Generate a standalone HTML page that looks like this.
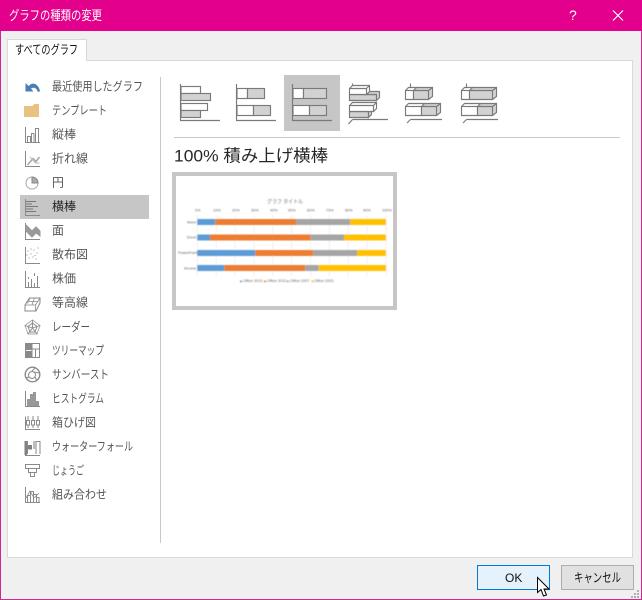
<!DOCTYPE html>
<html lang="ja"><head><meta charset="utf-8"><title>グラフの種類の変更</title>
<style>
html,body{margin:0;padding:0;background:#f0f0f0;width:642px;height:600px;overflow:hidden}
svg{display:block}
text{font-family:"Liberation Sans","Noto Sans CJK JP",sans-serif}
.l{font-size:12px;fill:#555}
</style></head><body>
<svg width="642" height="600" viewBox="0 0 642 600" xmlns="http://www.w3.org/2000/svg">
<defs><filter id="b" x="0" y="0" width="1" height="1"><feGaussianBlur stdDeviation="0.45"/></filter></defs>
<rect width="642" height="600" fill="#f0f0f0"/>
<rect x=".5" y=".5" width="641" height="599" fill="none" stroke="#d3278f"/>
<rect width="642" height="31" fill="#e3008c"/>
<text x="9" y="20" font-size="13" fill="#fff" textLength="93" lengthAdjust="spacingAndGlyphs">グラフの種類の変更</text>
<text x="569" y="20" font-size="14" fill="#fff">?</text>
<path d="M613 10.5 623 20.5M623 10.5 613 20.5" stroke="#fff" stroke-width="1.2" fill="none"/>

<rect x="7.5" y="60.5" width="625" height="497" fill="#fff" stroke="#d9d9d9"/>
<path d="M7.5 61V39.5H86.5V61" fill="#fff" stroke="#d9d9d9"/>
<rect x="8" y="58" width="78" height="4" fill="#fff"/>
<text x="15" y="54" font-size="12.5" fill="#111" textLength="63" lengthAdjust="spacingAndGlyphs">すべてのグラフ</text>

<rect x="20" y="195" width="129" height="24" fill="#c6c6c6"/>
<rect x="160" y="77" width="1" height="466" fill="#c8c8c8"/>

<g class="l">
<text class="l" x="52" y="90.5" textLength="91" lengthAdjust="spacingAndGlyphs">最近使用したグラフ</text>
<text class="l" x="52" y="114.5" textLength="55" lengthAdjust="spacingAndGlyphs">テンプレート</text>
<text class="l" x="52" y="138.5" textLength="24" lengthAdjust="spacingAndGlyphs">縦棒</text>
<text class="l" x="52" y="162.5" textLength="36" lengthAdjust="spacingAndGlyphs">折れ線</text>
<text class="l" x="52" y="186.5" textLength="12" lengthAdjust="spacingAndGlyphs">円</text>
<text class="l" style="fill:#222" x="52" y="210.5" textLength="24" lengthAdjust="spacingAndGlyphs">横棒</text>
<text class="l" x="52" y="234.5" textLength="12" lengthAdjust="spacingAndGlyphs">面</text>
<text class="l" x="52" y="258.5" textLength="36" lengthAdjust="spacingAndGlyphs">散布図</text>
<text class="l" x="52" y="282.5" textLength="24" lengthAdjust="spacingAndGlyphs">株価</text>
<text class="l" x="52" y="306.5" textLength="36" lengthAdjust="spacingAndGlyphs">等高線</text>
<text class="l" x="52" y="331" textLength="38" lengthAdjust="spacingAndGlyphs">レーダー</text>
<text class="l" x="52" y="354.5" textLength="52" lengthAdjust="spacingAndGlyphs">ツリーマップ</text>
<text class="l" x="52" y="378.5" textLength="57" lengthAdjust="spacingAndGlyphs">サンバースト</text>
<text class="l" x="52" y="402.5" textLength="52" lengthAdjust="spacingAndGlyphs">ヒストグラム</text>
<text class="l" x="52" y="426.5" textLength="44" lengthAdjust="spacingAndGlyphs">箱ひげ図</text>
<text class="l" x="52" y="450.5" textLength="81" lengthAdjust="spacingAndGlyphs">ウォーターフォール</text>
<text class="l" x="52" y="474.5" textLength="32" lengthAdjust="spacingAndGlyphs">じょうご</text>
<text class="l" x="52" y="498.5" textLength="55" lengthAdjust="spacingAndGlyphs">組み合わせ</text>
</g>

<!-- list icons -->
<path d="M25.5 83V91.5H33.5L31 88.8C32.6 87.2 36.5 87 37.8 92L40 91.2C38.8 84.4 33 81 28.6 86Z" fill="#4a7fb5"/>
<path d="M24 106H32.5L34 104H39V117H24Z" fill="#e9c282"/>
<g fill="none" stroke="#8a8a8a" stroke-width="1">
<!-- column -->
<path d="M25.5 127V142.5H40"/>
<path d="M27.5 142V136.5H30.5V142M31.5 142V133.5H34V142M35.5 142V128.5H38.5V142"/>
<!-- line -->
<path d="M25.5 151V166.5H40"/>
<path d="M27.5 165 33 158.5 36 161.5 39.5 157" stroke="#aaa" stroke-width="1.6"/>
<path d="M30 157 35.5 163 39.5 163" stroke="#bbb"/>
<!-- pie -->
<circle cx="32" cy="183" r="6" stroke="#aaa"/>
<path d="M32 177V183H38A6 6 0 0 0 32 177Z" fill="#aaa" stroke="#888"/>
<!-- bar -->
<path d="M25.5 199V215.5H40"/>
<path d="M26 201.5H36M26 204H32M26 206.5H38M26 209H33M26 211.5H36" stroke="#777"/>
<!-- area -->
<path d="M25.5 223V239.5H40"/>
<path d="M26 225 32 231 36 227 40 231V236L36 233 32 237 26 231Z" fill="#999" stroke="#999"/>
<!-- scatter -->
<path d="M25.5 247V263.5H40"/>
<!-- stock -->
<path d="M25.5 271V287.5H40"/>
<path d="M28.5 287V282M31.5 287V279M34.5 287V283M37.5 287V276M28.5 277V279M34.5 273V276"/>
<!-- contour -->
<path d="M25 305 29.5 298H40V303L36 311H25Z"/>
<path d="M25 305H35.5L40 298M35.5 305V311M29 301.5H38M27.5 303.5 30 298M32 305 34.5 298" stroke-width=".8"/>
<!-- radar -->
<path d="M32.5 320 40 325.5 37 334H28L25 325.5Z" stroke="#aaa"/>
<path d="M32.5 323 37 326.5 35 332H30L28 326.5ZM32.5 320V328M25 325.5 32.5 328 40 325.5M28 334 32.5 328 37 334" stroke="#888" stroke-width=".9"/>
<!-- treemap -->
<rect x="25.5" y="343.5" width="14" height="14" stroke="#888"/>
<!-- sunburst -->
<circle cx="32.5" cy="374.5" r="7.3" stroke-width="1.4"/>
<circle cx="32" cy="375" r="3.5" stroke-width="1"/>
<path d="M32 371 35 368M29 377 26 378M35 377 37 381M34 372 39 373" stroke-width="1"/>
<!-- histogram -->
<path d="M25.5 391V406.5H40"/>
<!-- box -->
<path d="M25.5 416.5V429.5H40"/>
<path d="M28 416V420M28 425V428M33 416V420M33 425V428M38 416V420M38 425V428"/>
<rect x="26.5" y="420.5" width="3" height="4.5" fill="#fff"/><rect x="31.5" y="420.5" width="3" height="4.5" fill="#fff"/><rect x="36.5" y="420.5" width="3" height="4.5" fill="#fff"/>
<!-- waterfall -->
<path d="M27.5 454V441M36 454V441.5H40V454" />
<path d="M25 455.5H40"/>
<!-- funnel -->
<path d="M25.5 464.5H39.5V468.5H25.5ZM28.5 468.5H36.5V472.5H28.5ZM30.5 472.5H34.5V476.5H30.5Z"/>
<!-- combo -->
<path d="M25.5 487V502.5H40"/>
<path d="M27.5 502V495.5H30.5V502M30.5 502V491.5H33.5V502M33.5 502V494.5H36.5V502M36.5 502V497.5H39V502"/>
<path d="M26 498 30 491 34 498 39 493" stroke-width=".8"/>
</g>
<g fill="#999">
<rect x="25" y="343" width="7" height="7" fill="#8a8a8a"/><rect x="25" y="351" width="7" height="7" fill="#8a8a8a"/>
<path d="M32 343.5V358M32 349H39M35.5 349V358" stroke="#888" fill="none"/>
<rect x="27" y="399" width="3" height="7"/><rect x="30" y="394" width="3" height="12"/><rect x="33" y="392" width="3" height="14"/><rect x="36" y="401" width="3" height="5"/>
<rect x="24.5" y="441" width="2.5" height="14" fill="#808080"/>
<rect x="28" y="445" width="4" height="4.5" fill="#808080"/>
<rect x="33" y="441" width="3" height="8" fill="#bdbdbd"/>
<circle cx="28" cy="251" r=".6"/><circle cx="31" cy="254" r=".6"/><circle cx="34" cy="250" r=".6"/><circle cx="37" cy="253" r=".6"/><circle cx="29" cy="258" r=".6"/><circle cx="33" cy="257" r=".6"/><circle cx="36" cy="259" r=".6"/><circle cx="38" cy="248" r=".6"/><circle cx="31" cy="249" r=".6"/><circle cx="27" cy="255" r=".6"/><circle cx="35" cy="255.5" r=".6"/>
</g>

<!-- selected thumb -->
<rect x="284" y="75" width="56" height="56" fill="#c6c6c6"/>
<g stroke="#7a7a7a" stroke-width="1.15" fill="#fff">
<!-- 1 -->
<rect x="181" y="86.5" width="19.5" height="7"/>
<rect x="181" y="93.5" width="29.5" height="7" fill="#d2d2d2"/>
<rect x="181" y="103.5" width="26.5" height="7"/>
<rect x="181" y="110.5" width="19.5" height="7" fill="#d2d2d2"/>
<path d="M180.5 84V120.5H220" fill="none"/>
<!-- 2 -->
<rect x="237" y="88.5" width="10.5" height="10"/><rect x="247.5" y="88.5" width="17" height="10" fill="#d2d2d2"/>
<rect x="237" y="105.5" width="16.5" height="10"/><rect x="253.5" y="105.5" width="17" height="10" fill="#d2d2d2"/>
<path d="M236.5 84V120.5H276" fill="none"/>
<!-- 3 -->
<rect x="293" y="88.5" width="10.5" height="10"/><rect x="303.5" y="88.5" width="23" height="10" fill="#d2d2d2"/>
<rect x="293" y="105.5" width="16.5" height="10"/><rect x="309.5" y="105.5" width="17" height="10" fill="#d2d2d2"/>
<path d="M292.5 84V120.5H332" fill="none"/>
<!-- 4 -->
<path d="M352.5 83.5V86M352.5 119.5H388M352.5 119.5 348.5 124" fill="none"/>
<path d="M349.5 94.5H376.5V100.5H349.5Z" fill="#d2d2d2"/><path d="M369.5 91.5H379.5V97.5L376.5 100.5V94.5H366.5Z" fill="#d2d2d2"/>
<path d="M349.5 88.5 352.5 85.5H369.5V91.5L366.5 94.5H349.5Z"/><path d="M366.5 94.5V88.5H349.5M366.5 88.5 369.5 85.5" fill="none"/>
<path d="M349.5 111.5H368.5V117.5H349.5Z" fill="#d2d2d2"/><path d="M368.5 117.5 371.5 114.5V111.5H368.5Z" fill="#d2d2d2"/>
<path d="M349.5 105.5 352.5 102.5H376.5V108.5L373.5 111.5H349.5Z"/><path d="M373.5 111.5V105.5H349.5M373.5 105.5 376.5 102.5" fill="none"/>
<!-- 5 -->
<path d="M410.5 83.5V87M410.5 119.5H442M410.5 119.5 407 123" fill="none"/>
<path d="M405.5 90.5 408.5 87.5H417V90.5H413.5V99.5H405.5Z"/><path d="M405.5 90.5H413.5" fill="none"/>
<path d="M413.5 90.5 416.5 87.5H432.5V96.5L428.5 99.5H413.5Z" fill="#d2d2d2"/><path d="M413.5 90.5H428.5V99.5M428.5 90.5 432.5 87.5" fill="none"/>
<path d="M405.5 106.5 408.5 103.5H424.5V106.5H421.5V115.5H405.5Z"/><path d="M405.5 106.5H421.5" fill="none"/>
<path d="M421.5 106.5 424.5 103.5H440.5V112.5L436.5 115.5H421.5Z" fill="#d2d2d2"/><path d="M421.5 106.5H436.5V115.5M436.5 106.5 440.5 103.5" fill="none"/>
<!-- 6 -->
<path d="M466.5 83.5V87M466.5 119.5H498M466.5 119.5 463 123" fill="none"/>
<path d="M461.5 90.5 464.5 87.5H473V90.5H469.5V99.5H461.5Z"/><path d="M461.5 90.5H469.5" fill="none"/>
<path d="M469.5 90.5 472.5 87.5H496.5V96.5L492.5 99.5H469.5Z" fill="#d2d2d2"/><path d="M469.5 90.5H492.5V99.5M492.5 90.5 496.5 87.5" fill="none"/>
<path d="M461.5 106.5 464.5 103.5H480.5V106.5H477.5V115.5H461.5Z"/><path d="M461.5 106.5H477.5" fill="none"/>
<path d="M477.5 106.5 480.5 103.5H496.5V112.5L492.5 115.5H477.5Z" fill="#d2d2d2"/><path d="M477.5 106.5H492.5V115.5M492.5 106.5 496.5 103.5" fill="none"/>
</g>
<rect x="174" y="137" width="446" height="1" fill="#c8c8c8"/>

<text x="174" y="161.5" font-size="17" fill="#262626" textLength="154" lengthAdjust="spacingAndGlyphs">100% 積み上げ横棒</text>

<!-- preview -->
<rect x="172" y="172" width="225" height="138" fill="#c6c6c6"/>
<rect x="176" y="176" width="217" height="130" fill="#fff"/>
<g filter="url(#b)">
<g stroke="#e8e8e8" stroke-width=".7">
<path d="M197.3 215V276M216.2 215V276M235 215V276M254 215V276M272.8 215V276M291.6 215V276M310.5 215V276M329.4 215V276M348.2 215V276M367 215V276M386 215V276"/>
</g>
<text x="267" y="203.5" font-size="5.5" fill="#777" textLength="36" lengthAdjust="spacingAndGlyphs">グラフ タイトル</text>
<g font-size="3.8" fill="#666">
<text x="195" y="211.5">0%</text><text x="213" y="211.5">10%</text><text x="232" y="211.5">20%</text><text x="251" y="211.5">30%</text><text x="270" y="211.5">40%</text><text x="288" y="211.5">50%</text><text x="307" y="211.5">60%</text><text x="326" y="211.5">70%</text><text x="345" y="211.5">80%</text><text x="363" y="211.5">90%</text><text x="382" y="211.5">100%</text>
<text x="187" y="223.5">Word</text><text x="187" y="238.5">Excel</text><text x="178" y="254">PowerPoint</text><text x="184" y="269.5">Access</text>
<text x="243" y="282">Office 2013</text><text x="267" y="282">Office 2010</text><text x="290" y="282">Office 2007</text><text x="314" y="282">Office 2003</text>
</g>
<rect x="240" y="280.5" width="1.8" height="1.8" fill="#5b9bd5"/><rect x="264" y="280.5" width="1.8" height="1.8" fill="#ed7d31"/><rect x="287" y="280.5" width="1.8" height="1.8" fill="#a5a5a5"/><rect x="311.5" y="280.5" width="1.8" height="1.8" fill="#ffc000"/>
<rect x="197.3" y="219" width="18" height="6" fill="#5b9bd5"/><rect x="215.3" y="219" width="80.7" height="6" fill="#ed7d31"/><rect x="296" y="219" width="54" height="6" fill="#a5a5a5"/><rect x="350" y="219" width="36" height="6" fill="#ffc000"/>
<rect x="197.3" y="234.5" width="12.7" height="6" fill="#5b9bd5"/><rect x="210" y="234.5" width="100.7" height="6" fill="#ed7d31"/><rect x="310.7" y="234.5" width="33.3" height="6" fill="#a5a5a5"/><rect x="344" y="234.5" width="42" height="6" fill="#ffc000"/>
<rect x="197.3" y="250" width="58" height="6" fill="#5b9bd5"/><rect x="255.3" y="250" width="58" height="6" fill="#ed7d31"/><rect x="313.3" y="250" width="43.7" height="6" fill="#a5a5a5"/><rect x="357" y="250" width="29" height="6" fill="#ffc000"/>
<rect x="197.3" y="265" width="27" height="6" fill="#5b9bd5"/><rect x="224.3" y="265" width="81" height="6" fill="#ed7d31"/><rect x="305.3" y="265" width="13.4" height="6" fill="#a5a5a5"/><rect x="318.7" y="265" width="67.3" height="6" fill="#ffc000"/>
</g>

<!-- buttons -->
<rect x="477.5" y="565.5" width="72" height="24" fill="#e5f1fb" stroke="#0078d7" stroke-width="1"/>
<text x="505" y="582" font-size="12" fill="#111">OK</text>
<rect x="561.5" y="565.5" width="72" height="24" fill="#e1e1e1" stroke="#adadad"/>
<text x="574" y="582" font-size="12.5" fill="#111" textLength="47" lengthAdjust="spacingAndGlyphs">キャンセル</text>

<!-- cursor -->
<path d="M537.5 577.5V592.5L541 589.5 543.5 596 546.5 595 544 589H549Z" fill="#fff" stroke="#000" stroke-width="1"/>

<!-- grip -->
<g fill="#b0b0b0">
<rect x="637" y="590" width="2" height="2"/><rect x="634" y="593" width="2" height="2"/><rect x="637" y="593" width="2" height="2"/><rect x="631" y="596" width="2" height="2"/><rect x="634" y="596" width="2" height="2"/><rect x="637" y="596" width="2" height="2"/>
</g>
</svg>
</body></html>
